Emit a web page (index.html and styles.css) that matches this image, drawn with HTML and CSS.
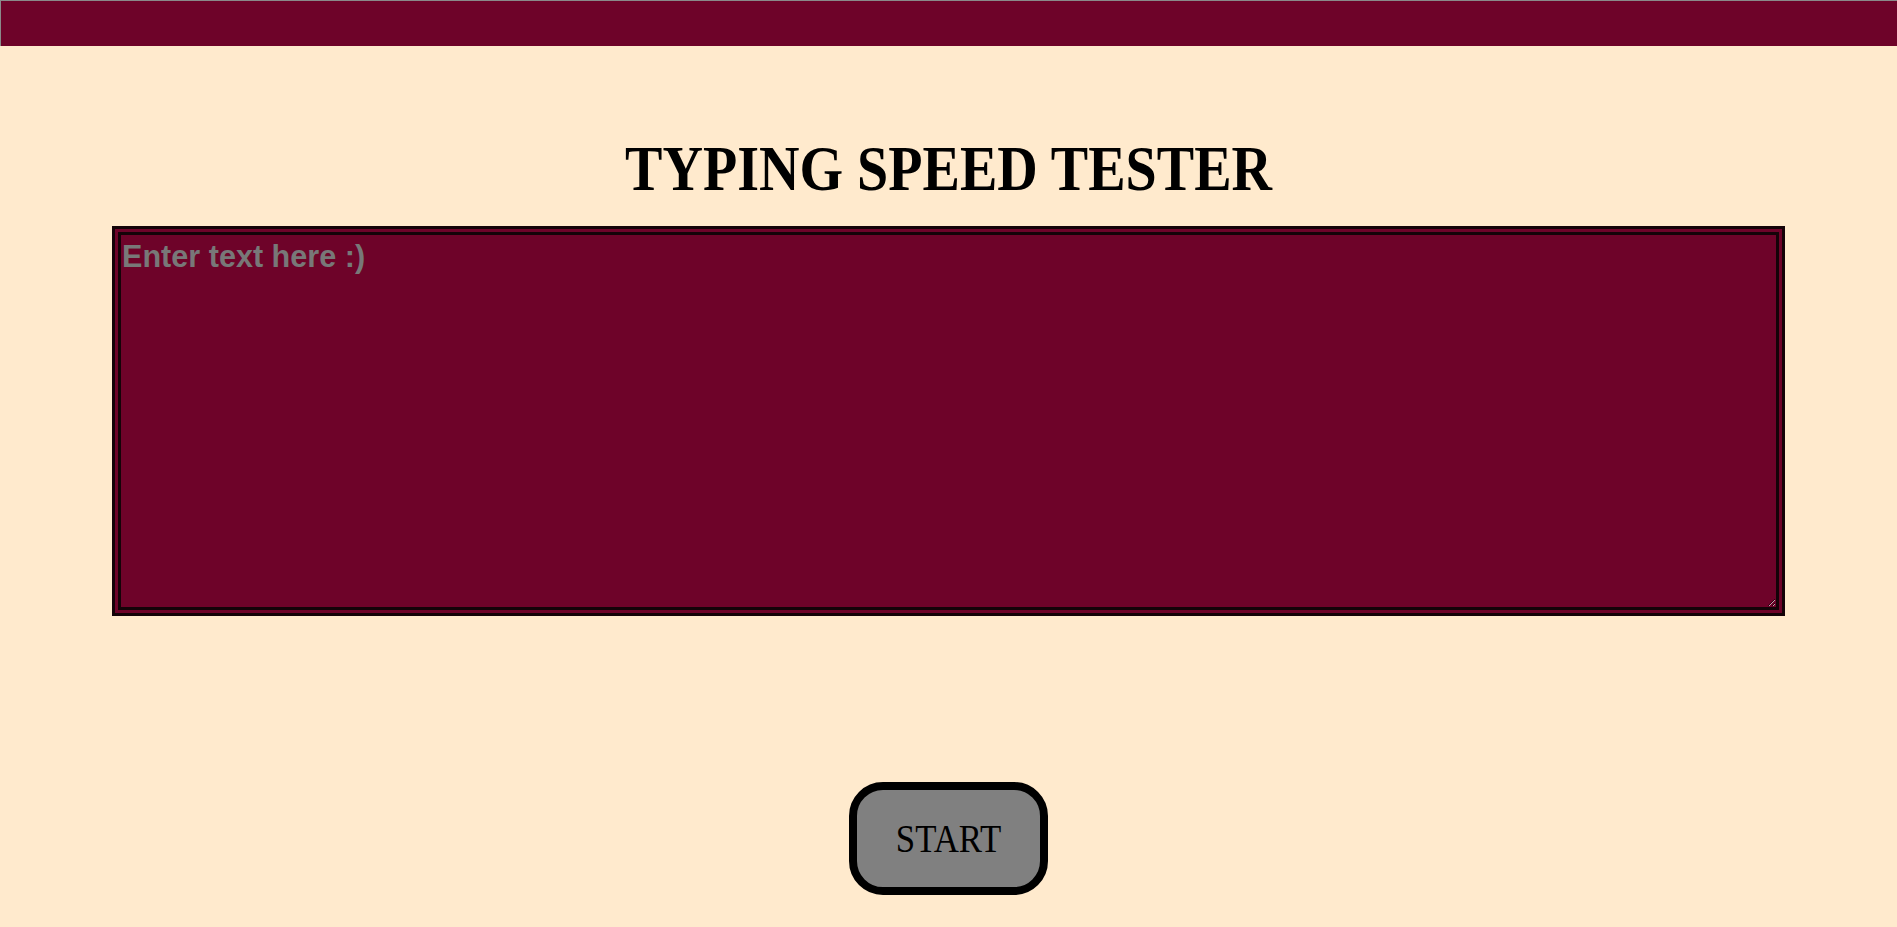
FILE: index.html
```html
<!DOCTYPE html>
<html lang="en">
<head>
<meta charset="utf-8">
<title>Typing Speed Tester</title>
<link rel="stylesheet" href="styles.css">
</head>
<body>
<header class="topbar"></header>
<main class="container">
  <h1 class="title"><span class="squeeze">TYPING SPEED TESTER</span></h1>
  <textarea class="entry" placeholder="Enter text here :)"></textarea>
  <button class="start" type="button"><span class="squeeze">START</span></button>
</main>
</body>
</html>
```
FILE: styles.css
```css
html, body {
  margin: 0;
  padding: 0;
}
body {
  background: #ffeacd;
  font-family: "Liberation Serif", serif;
  height: 927px;
  overflow: hidden;
}
.topbar {
  height: 45px;
  background: #6e0329;
  border-top: 1px solid #8a8a8a;
  border-left: 1px solid #8a8a8a;
}
.container {
  display: flex;
  flex-direction: column;
  align-items: center;
}
.title {
  margin: 87px 0 0;
  font-size: 63px;
  line-height: 72px;
  font-weight: bold;
  color: #000;
}
.title .squeeze {
  transform: scaleX(0.89);
}
.squeeze {
  display: inline-block;
  transform: scaleX(0.87);
}
.entry {
  box-sizing: border-box;
  margin-top: 21px;
  width: 1673px;
  height: 390px;
  background: #6e0329;
  border: 9px double #140308;
  padding: 4px 1px;
  font-family: "Liberation Sans", Arial, sans-serif;
  font-size: 30.6px;
  font-weight: bold;
  color: #ddd;
  outline: none;
}
.entry::placeholder {
  color: #787878;
  opacity: 1;
}
.start {
  box-sizing: border-box;
  margin-top: 166px;
  width: 199px;
  height: 113px;
  border: 8px solid #000;
  border-radius: 34px;
  background: #808080;
  font-family: "Liberation Serif", serif;
  font-size: 40px;
  color: #000;
  padding: 0;
}
```
